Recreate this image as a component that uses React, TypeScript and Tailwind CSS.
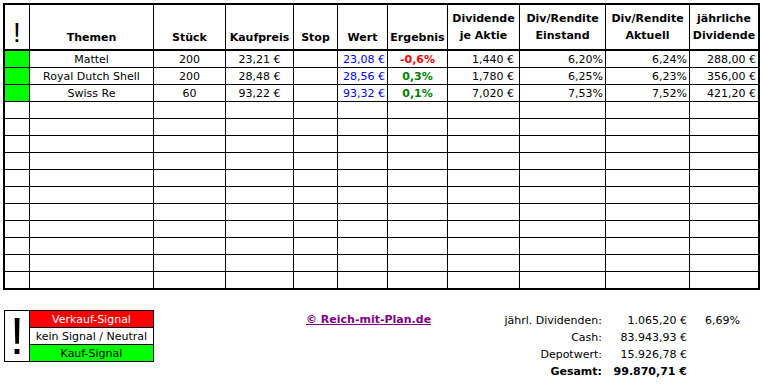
import React from "react";

interface Position {
  name: string;
  qty: string;
  buy: string;
  value: string;
  result: string;
  negative: boolean;
  dividend: string;
  yieldCost: string;
  yieldNow: string;
  annual: string;
}

const positions: Position[] = [
  {
    name: "Mattel",
    qty: "200",
    buy: "23,21 €",
    value: "23,08 €",
    result: "-0,6%",
    negative: true,
    dividend: "1,440 €",
    yieldCost: "6,20%",
    yieldNow: "6,24%",
    annual: "288,00 €",
  },
  {
    name: "Royal Dutch Shell",
    qty: "200",
    buy: "28,48 €",
    value: "28,56 €",
    result: "0,3%",
    negative: false,
    dividend: "1,780 €",
    yieldCost: "6,25%",
    yieldNow: "6,23%",
    annual: "356,00 €",
  },
  {
    name: "Swiss Re",
    qty: "60",
    buy: "93,22 €",
    value: "93,32 €",
    result: "0,1%",
    negative: false,
    dividend: "7,020 €",
    yieldCost: "7,53%",
    yieldNow: "7,52%",
    annual: "421,20 €",
  },
];

// column widths incl. the 1px right grid line
const W = [
  "w-[25px]",
  "w-[124px]",
  "w-[72px]",
  "w-[68px]",
  "w-[44px]",
  "w-[50px]",
  "w-[60px]",
  "w-[72px]",
  "w-[86px]",
  "w-[84px]",
  "w-[68px]",
];

const FONT = "font-['DejaVu_Sans',sans-serif]";

function HeadCell({ i, lines }: { i: number; lines: string[] }) {
  const last = i === W.length - 1;
  return (
    <div
      className={`${W[i]} shrink-0 flex flex-col justify-end items-center text-center font-bold ${
        lines.length > 1 ? "pb-[5px] leading-[17px]" : "pb-[3px] leading-[16px]"
      } ${last ? "" : "border-r border-black"}`}
    >
      {lines.map((l) => (
        <span key={l} className="whitespace-nowrap">
          {l}
        </span>
      ))}
    </div>
  );
}

function Cell({
  i,
  align = "center",
  className = "",
  children,
}: {
  i: number;
  align?: "center" | "right";
  className?: string;
  children?: React.ReactNode;
}) {
  const last = i === W.length - 1;
  return (
    <div
      className={`${W[i]} shrink-0 flex items-center whitespace-nowrap ${
        align === "right" ? "justify-end pr-[2px]" : "justify-center"
      } ${last ? "" : "border-r border-black"} ${className}`}
    >
      {children}
    </div>
  );
}

export default function App() {
  const empty = Array.from({ length: 11 });

  return (
    <div className={`w-[766px] h-[384px] bg-white text-black text-[11px] ${FONT} pt-[3px] pl-[3px]`}>
      <div className="w-[757px] border-2 border-black">
        {/* header */}
        <div className="flex h-[46px] border-b-2 border-black">
          <div className="w-[25px] shrink-0 border-r border-black flex items-end justify-center pb-[1px]">
            <span className="font-['Liberation_Sans',sans-serif] text-[28px] leading-[30px]">!</span>
          </div>
          <HeadCell i={1} lines={["Themen"]} />
          <HeadCell i={2} lines={["Stück"]} />
          <HeadCell i={3} lines={["Kaufpreis"]} />
          <HeadCell i={4} lines={["Stop"]} />
          <HeadCell i={5} lines={["Wert"]} />
          <HeadCell i={6} lines={["Ergebnis"]} />
          <HeadCell i={7} lines={["Dividende", "je Aktie"]} />
          <HeadCell i={8} lines={["Div/Rendite", "Einstand"]} />
          <HeadCell i={9} lines={["Div/Rendite", "Aktuell"]} />
          <HeadCell i={10} lines={["jährliche", "Dividende"]} />
        </div>

        {positions.map((p) => (
          <div key={p.name} className="flex h-[17px] border-b border-black leading-none">
            <Cell i={0} className="bg-[#00ff00]" />
            <Cell i={1}>{p.name}</Cell>
            <Cell i={2}>{p.qty}</Cell>
            <Cell i={3}>{p.buy}</Cell>
            <Cell i={4} />
            <Cell i={5} align="right" className="text-[#0000ff]">
              {p.value}
            </Cell>
            <Cell
              i={6}
              className={`font-bold ${p.negative ? "text-[#ff0000]" : "text-[#008000]"}`}
            >
              {p.result}
            </Cell>
            <Cell i={7} align="right" className="!pr-[5px]">
              {p.dividend}
            </Cell>
            <Cell i={8} align="right">
              {p.yieldCost}
            </Cell>
            <Cell i={9} align="right">
              {p.yieldNow}
            </Cell>
            <Cell i={10} align="right">
              {p.annual}
            </Cell>
          </div>
        ))}

        {empty.map((_, r) => (
          <div
            key={r}
            className={`flex ${r === empty.length - 1 ? "h-[16px]" : "h-[17px] border-b border-black"}`}
          >
            {W.map((_, i) => (
              <Cell key={i} i={i} />
            ))}
          </div>
        ))}
      </div>

      {/* footer */}
      <div className="flex mt-[20px] ml-[1px] leading-none">
        <div className="w-[150px] h-[52px] border border-black flex">
          <div className="w-[25px] border-r border-black flex items-center justify-center">
            <span className="font-['Liberation_Sans',sans-serif] text-[51px] leading-none">!</span>
          </div>
          <div className="flex-1 flex flex-col">
            <div className="h-[17px] border-b border-black bg-[#ff0000] text-white flex items-center justify-center">
              Verkauf-Signal
            </div>
            <div className="h-[17px] border-b border-black flex items-center justify-center whitespace-nowrap">
              kein Signal / Neutral
            </div>
            <div className="h-[16px] bg-[#00ff00] flex items-center justify-center">Kauf-Signal</div>
          </div>
        </div>

        <div className="w-[326px] pl-[152px] pt-[4px]">
          <a href="#" className="font-bold text-[#800080] underline whitespace-nowrap">
            © Reich-mit-Plan.de
          </a>
        </div>

        <div className="grid grid-cols-[122px_85px_60px] auto-rows-[17px] items-center mt-[2px]">
          <span className="text-right whitespace-nowrap">jährl. Dividenden:</span>
          <span className="text-right">1.065,20 €</span>
          <span className="pl-[18px]">6,69%</span>

          <span className="text-right">Cash:</span>
          <span className="text-right">83.943,93 €</span>
          <span />

          <span className="text-right">Depotwert:</span>
          <span className="text-right">15.926,78 €</span>
          <span />

          <span className="text-right font-bold">Gesamt:</span>
          <span className="text-right font-bold">99.870,71 €</span>
          <span />
        </div>
      </div>
    </div>
  );
}
